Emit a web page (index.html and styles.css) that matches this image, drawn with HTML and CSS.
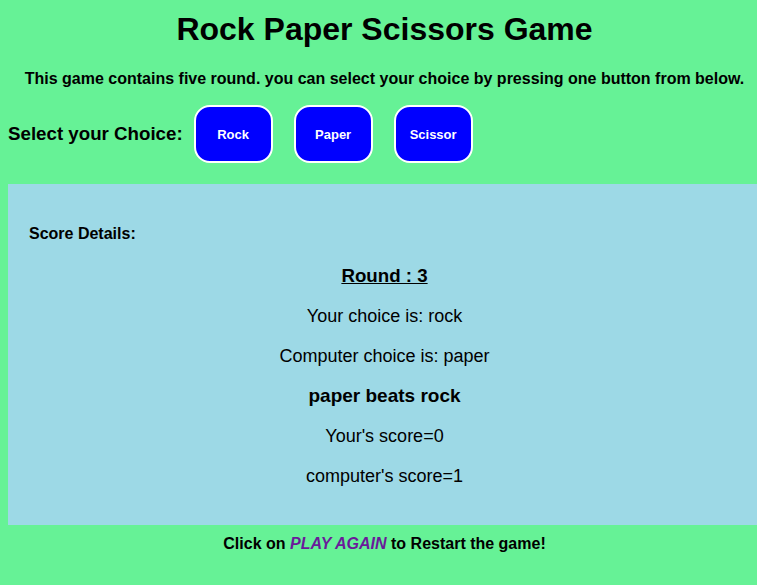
FILE: index.html
```html
<!DOCTYPE html>
<html lang="en">
<head>
<meta charset="utf-8">
<title>Rock Paper Scissors Game</title>
<link rel="stylesheet" href="styles.css">
</head>
<body>
  <div class="page">
    <h1 class="title">Rock Paper Scissors Game</h1>
    <p class="intro">This game contains five round. you can select your choice by pressing one button from below.</p>
    <div class="choices">
      <span class="choices-label">Select your Choice:</span>
      <button class="choice-btn">Rock</button>
      <button class="choice-btn">Paper</button>
      <button class="choice-btn">Scissor</button>
    </div>
    <section class="score">
      <h4 class="score-title">Score Details:</h4>
      <h3 class="round">Round : 3</h3>
      <p class="line">Your choice is: rock</p>
      <p class="line">Computer choice is: paper</p>
      <h3 class="result">paper beats rock</h3>
      <p class="line">Your's score=0</p>
      <p class="line">computer's score=1</p>
    </section>
    <p class="restart">Click on <em class="again">PLAY AGAIN</em> to Restart the game!</p>
  </div>
</body>
</html>
```
FILE: styles.css
```css
html, body {
  margin: 0;
  padding: 0;
  overflow-x: hidden;
}
body {
  background: #66f296;
  font-family: "Liberation Sans", Arial, sans-serif;
  color: #000;
}
.page {
  margin: 0 -4px 0 8px;
}
.title {
  margin: 11px 0 0;
  font-size: 32px;
  line-height: 37px;
  font-weight: bold;
  text-align: center;
}
.intro {
  margin: 22px 0 0;
  font-size: 16px;
  line-height: 18px;
  font-weight: bold;
  text-align: center;
}
.choices {
  display: flex;
  align-items: center;
  margin-top: 17px;
}
.choices-label {
  font-size: 18.72px;
  font-weight: bold;
  margin-right: 11px;
}
.choice-btn {
  width: 79px;
  height: 58px;
  margin-right: 21px;
  background: #0000ff;
  color: #fff;
  border: 2px solid #fff;
  border-radius: 16px;
  font-family: "Liberation Sans", Arial, sans-serif;
  font-size: 13px;
  font-weight: bold;
  padding: 0;
}
.score {
  margin-top: 21px;
  background: #9dd9e6;
  padding: 40px 21px 39px;
  text-align: center;
}
.score h3, .score h4, .score p {
  margin: 0 0 20px;
  line-height: 20px;
}
.score-title {
  text-align: left;
  font-size: 16px;
  font-weight: bold;
}
.score .score-title {
  margin-bottom: 22px;
}
.round {
  font-size: 18.72px;
  text-decoration: underline;
}
.result {
  font-size: 19px;
}
.line {
  font-size: 18px;
}
.score .line:last-child {
  margin-bottom: 0;
}
.restart {
  margin: 10px 0 0;
  font-size: 16px;
  line-height: 18px;
  font-weight: bold;
  text-align: center;
}
.again {
  color: #6a1b9a;
  font-style: italic;
}
```
